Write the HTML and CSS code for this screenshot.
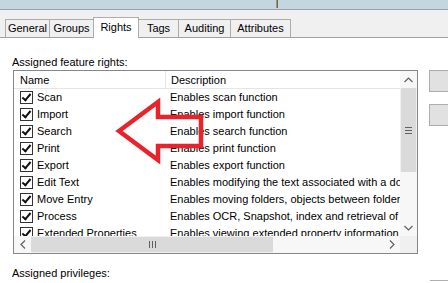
FILE: index.html
```html
<!DOCTYPE html>
<html lang="en">
<head>
    <meta charset="UTF-8">
    <title>Properties - Rights</title>
    <link rel="stylesheet" href="styles.css">
</head>
<body>
    <div class="titlebar"><span class="title-mark"></span></div>

    <div class="tabs">
        <div class="tab tab-general">General</div>
        <div class="tab tab-groups">Groups</div>
        <div class="tab tab-rights active">Rights</div>
        <div class="tab tab-tags">Tags</div>
        <div class="tab tab-auditing">Auditing</div>
        <div class="tab tab-attributes">Attributes</div>
    </div>

    <section class="page">
        <div class="label">Assigned feature rights:</div>

        <div class="rights-area">
            <div class="listbox">
                <div class="list-top">
                    <div class="viewport">
                        <div class="list-header">
                            <div class="col-name">Name</div>
                            <div class="col-desc">Description</div>
                        </div>
                        <div class="list-rows">
                            <div class="list-row"><div class="col-name"><span class="check"></span>Scan</div><div class="col-desc">Enables scan function</div></div>
                            <div class="list-row"><div class="col-name"><span class="check"></span>Import</div><div class="col-desc">Enables import function</div></div>
                            <div class="list-row"><div class="col-name"><span class="check"></span>Search</div><div class="col-desc">Enables search function</div></div>
                            <div class="list-row"><div class="col-name"><span class="check"></span>Print</div><div class="col-desc">Enables print function</div></div>
                            <div class="list-row"><div class="col-name"><span class="check"></span>Export</div><div class="col-desc">Enables export function</div></div>
                            <div class="list-row"><div class="col-name"><span class="check"></span>Edit Text</div><div class="col-desc">Enables modifying the text associated with a document</div></div>
                            <div class="list-row"><div class="col-name"><span class="check"></span>Move Entry</div><div class="col-desc">Enables moving folders, objects between folders</div></div>
                            <div class="list-row"><div class="col-name"><span class="check"></span>Process</div><div class="col-desc">Enables OCR, Snapshot, index and retrieval of text</div></div>
                            <div class="list-row"><div class="col-name"><span class="check"></span>Extended Properties</div><div class="col-desc">Enables viewing extended property information</div></div>
                        </div>
                    </div>

                    <div class="vscroll">
                        <div class="sb-btn">
                            <svg width="9" height="6" viewBox="0 0 9 6"><polyline points="0.5,5 4.5,1 8.5,5" fill="none" stroke="#606060" stroke-width="1.2"/></svg>
                        </div>
                        <div class="vthumb"><span class="grip-h"></span></div>
                        <div class="vtrack"></div>
                        <div class="sb-btn">
                            <svg width="9" height="6" viewBox="0 0 9 6"><polyline points="0.5,1 4.5,5 8.5,1" fill="none" stroke="#606060" stroke-width="1.2"/></svg>
                        </div>
                    </div>
                </div>

                <div class="hscroll">
                    <div class="sb-btn">
                        <svg width="6" height="9" viewBox="0 0 6 9"><polyline points="5,0.5 1,4.5 5,8.5" fill="none" stroke="#606060" stroke-width="1.2"/></svg>
                    </div>
                    <div class="hthumb"><span class="grip-v"></span></div>
                    <div class="htrack"></div>
                    <div class="sb-btn">
                        <svg width="6" height="9" viewBox="0 0 6 9"><polyline points="1,0.5 5,4.5 1,8.5" fill="none" stroke="#606060" stroke-width="1.2"/></svg>
                    </div>
                    <div class="sb-corner"></div>
                </div>
            </div>

            <div class="side-buttons">
                <div class="btn"></div>
                <div class="btn"></div>
            </div>
        </div>

        <div class="bottom-row">
            <div class="label">Assigned privileges:</div>
            <div class="btn-edge"></div>
        </div>
    </section>

    <!-- red annotation arrow drawn over the list -->
    <svg class="arrow" width="120" height="80" viewBox="0 0 120 80">
        <polygon points="19,41 58,12 58,27 101,27 101,56 58,56 58,70" fill="none" stroke="#e8232b" stroke-width="4.5" stroke-linejoin="miter"/>
    </svg>
</body>
</html>
```

FILE: styles.css
```css
body {
    margin: 0;
    padding: 0;
    width: 448px;
    height: 283px;
    overflow: hidden;
    background: #ffffff;
    font-family: "Liberation Sans", Arial, sans-serif;
    font-size: 11px;
    color: #000000;
    position: relative;
}

.titlebar {
    height: 9px;
    background: #c4d7df;
    border-bottom: 1px solid #9aa3a8;
    position: relative;
}

.title-mark {
    position: absolute;
    left: 276px;
    top: 0;
    width: 2px;
    height: 8px;
    background: linear-gradient(90deg, #d58a1c 50%, #3d6fb0 50%);
}

.tabs {
    display: flex;
    align-items: flex-end;
    height: 27px;
    padding-left: 5px;
    background: #f0f0f0;
    border-bottom: 1px solid #a0a0a0;
}

.tab {
    box-sizing: border-box;
    height: 18px;
    line-height: 17px;
    margin-right: -1px;
    border: 1px solid #adadad;
    border-bottom: none;
    background: #f0f0f0;
    text-align: center;
    white-space: nowrap;
}

.tab-general { width: 45px; }
.tab-groups { width: 45px; }
.tab-rights { width: 46px; }
.tab-tags { width: 41px; }
.tab-auditing { width: 53px; }
.tab-attributes { width: 61px; }

.tab.active {
    height: 21px;
    line-height: 18px;
    margin-bottom: -1px;
    background: #ffffff;
    position: relative;
    z-index: 1;
}

.page {
    padding: 17px 0 0 12px;
}

.label {
    height: 14px;
    line-height: 14px;
}

.rights-area {
    display: flex;
    align-items: flex-start;
    margin-top: 1px;
    padding-left: 1px;
}

.listbox {
    width: 403px;
    border: 1px solid #828790;
}

.list-top {
    display: flex;
    height: 165px;
}

.viewport {
    width: 386px;
    overflow: hidden;
}

.list-header {
    display: flex;
    height: 17px;
    line-height: 19px;
    border-bottom: 1px solid #e5e5e5;
    background: #ffffff;
}

.list-header .col-name {
    padding-left: 6px;
    border-right: 1px solid #e5e5e5;
}

.col-name {
    width: 145px;
    flex-shrink: 0;
    white-space: nowrap;
    overflow: hidden;
}

.col-desc {
    padding-left: 5px;
    white-space: nowrap;
}

.list-row {
    display: flex;
    height: 17px;
    line-height: 17px;
}

.list-row .col-name {
    display: flex;
    align-items: center;
    padding-left: 6px;
    width: 145px;
}

.list-row .col-desc {
    padding-left: 5px;
}

.check {
    width: 11px;
    height: 11px;
    margin-right: 4px;
    border: 1px solid #333333;
    background: #ffffff;
    position: relative;
    flex-shrink: 0;
}

.check::after {
    content: "";
    position: absolute;
    left: 3px;
    top: 0px;
    width: 3px;
    height: 7px;
    border: solid #111111;
    border-width: 0 2px 2px 0;
    transform: rotate(40deg);
}

.vscroll {
    width: 17px;
    display: flex;
    flex-direction: column;
    background: #f0f0f0;
}

.sb-btn {
    width: 17px;
    height: 17px;
    display: flex;
    align-items: center;
    justify-content: center;
    background: #f7f7f7;
    flex-shrink: 0;
}

.vthumb {
    height: 84px;
    margin: 0 1px;
    background: #dadada;
    display: flex;
    align-items: center;
    justify-content: center;
}

.grip-h {
    width: 7px;
    height: 5px;
    border-top: 1px solid #606060;
    border-bottom: 1px solid #606060;
    background: linear-gradient(#606060, #606060) center / 7px 1px no-repeat;
}

.vtrack {
    flex: 1;
    background: #f7f7f7;
}

.hscroll {
    display: flex;
    height: 17px;
    background: #f0f0f0;
}

.hthumb {
    width: 242px;
    margin: 1px 0;
    background: #dadada;
    display: flex;
    align-items: center;
    justify-content: center;
}

.grip-v {
    width: 5px;
    height: 7px;
    border-left: 1px solid #606060;
    border-right: 1px solid #606060;
    background: linear-gradient(#606060, #606060) center / 1px 7px no-repeat;
}

.htrack {
    flex: 1;
    background: #f7f7f7;
}

.sb-corner {
    width: 17px;
    background: #f0f0f0;
}

.side-buttons {
    display: flex;
    flex-direction: column;
    gap: 12px;
    margin-left: 11px;
}

.btn {
    width: 19px;
    height: 20px;
    border: 1px solid #adadad;
    border-right: none;
    background: #e1e1e1;
}

.bottom-row {
    display: flex;
    justify-content: space-between;
    margin-top: 12px;
}

.btn-edge {
    width: 18px;
    height: 0;
    margin-top: 14px;
    border-top: 1px solid #adadad;
}

.arrow {
    position: absolute;
    left: 100px;
    top: 90px;
}
```
